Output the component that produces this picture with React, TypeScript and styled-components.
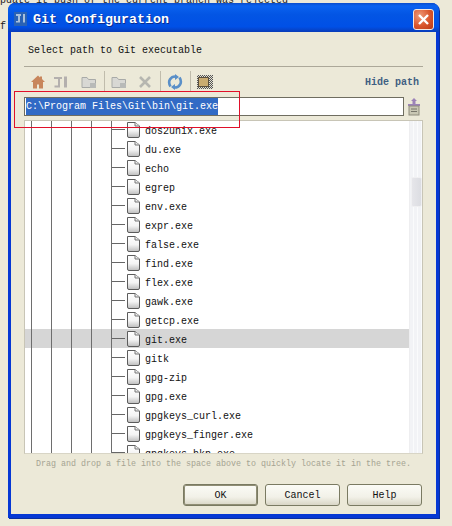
import React from "react";
import styled, { createGlobalStyle } from "styled-components";

const Global = createGlobalStyle`
  html, body { margin: 0; padding: 0; background: #ece9d8; }
  * { box-sizing: border-box; }
`;
const mono = `"Liberation Mono", "Courier New", monospace`;

const Desktop = styled.div`
  position: relative; width: 452px; height: 526px; overflow: hidden;
  background: #ece9d8; font-family: ${mono}; font-size: 10px; color: #000;
`;
const BackText = styled.div<{ $x: number; $y: number }>`
  position: absolute; left: ${p => p.$x}px; top: ${p => p.$y}px;
  white-space: nowrap; font-size: 10px; line-height: 12px; color: #222;
`;
const Win = styled.div`
  position: absolute; left: 8px; top: 3px; width: 431px; height: 515px;
  display: flex; flex-direction: column;
  background: #0a3fd0; border-radius: 7px 7px 0 0;
  border: solid #0638d4; border-width: 0 3px 4px 3px;
  box-shadow: 1px 1px 0 #0a2ea0;
`;
const TitleBar = styled.div`
  height: 29px; flex: none; display: flex; align-items: center; margin: 0 -3px;
  padding: 3px 5px 0 6px; gap: 6px; border-radius: 7px 7px 0 0;
  background: linear-gradient(180deg, #0a4ccc 0%, #0a62f0 10%, #0355e4 40%, #0050e6 82%, #0a3cb8 100%);
`;
const TitleText = styled.div`
  flex: 1; color: #fff; font-weight: bold; font-size: 13.33px;
  text-shadow: 1px 1px 0 #0a2c90;
`;
const CloseBtn = styled.div`
  width: 21px; height: 21px; border: 1px solid #f4e8e0; border-radius: 3px;
  background: radial-gradient(circle at 30% 30%, #ef9a78, #d9552c 55%, #b83a18);
  display: flex; align-items: center; justify-content: center;
`;
const Body = styled.div`
  flex: 1; min-height: 0; background: #ece9d8; display: flex; flex-direction: column;
  padding: 13px 13px 8px 13px;
`;
const Prompt = styled.div`
  height: 12px; line-height: 12px; padding-left: 4px; color: #111; flex: none;
`;
const Rule = styled.div`
  height: 1px; background: #aca899; margin-top: 9px; flex: none;
`;
const Toolbar = styled.div`
  height: 30px; flex: none; display: flex; align-items: center; padding: 0 0 1px 6px;
`;
const ToolIcon = styled.span<{ $mr: number }>`
  width: 16px; height: 16px; margin-right: ${p => p.$mr}px; display: flex; flex: none;
`;
const Sep = styled.span`
  width: 1px; height: 21px; background: #c0bcac; margin-right: 6px; flex: none;
`;
const HideLink = styled.span`
  margin-left: auto; color: #3f5f82; font-weight: bold; font-size: 10px; padding: 0 4px 0 0; margin-top: 2px;
`;
const PathRow = styled.div`
  display: flex; align-items: center; gap: 3px; flex: none; height: 19px; padding-right: 2px;
`;
const PathField = styled.div`
  flex: 1; height: 19px; background: #fff; border: 1px solid #6f6d60; padding: 0 1px;
  display: flex; align-items: center;
`;
const Selected = styled.span`
  background: #316ac5; color: #fff; line-height: 18px; height: 17px;
`;
const Tree = styled.div`
  margin-top: 4px; height: 334px; flex: none; position: relative; overflow: hidden;
  background-color: #fff; border: 1px solid #c8c5b6; border-bottom-color: #d8d5c6;
  display: flex;
`;
const Rows = styled.div`
  flex: 1; margin-top: -1px;
`;
const guide = "linear-gradient(#6e6e6e, #6e6e6e)";
const Row = styled.div<{ $sel?: boolean }>`
  height: 19px; display: flex; align-items: center; position: relative;
  padding-left: 102px; gap: 5px; white-space: nowrap; color: #111;
  background-color: ${p => (p.$sel ? "#d6d6d6" : "transparent")};
  background-image: ${guide}, ${guide}, ${guide}, ${guide}, ${guide};
  background-size: 1px 100%; background-repeat: no-repeat;
  background-position: 6px 0, 26px 0, 46px 0, 66px 0, 86px 0;
  &::before { content: ""; position: absolute; left: 87px; top: 9px; width: 13px; height: 1px; background: #666; }
`;
const RowLabel = styled.span`
  padding-top: 4px; line-height: 12px;
`;
const ScrollTrack = styled.div`
  width: 13px; flex: none; position: relative;
  background: repeating-linear-gradient(90deg, #f2f3f6 0 3px, #fafbfc 3px 4px);
  border-left: 1px solid #eeeef0;
`;
const Thumb = styled.div`
  position: absolute; left: 1px; top: 56px; width: 11px; height: 30px;
  background: linear-gradient(90deg, #e6e6ea, #dcdde2); border: 1px solid #f0f0f2; border-radius: 2px;
`;
const Hint = styled.div`
  height: 20px; flex: none; font-size: 8.33px; line-height: 20px; color: #a5a392; text-align: center;
`;
const Buttons = styled.div`
  display: flex; justify-content: flex-end; gap: 7px; margin-top: 10px; flex: none; padding-right: 1px;
`;
const Btn = styled.div<{ $def?: boolean }>`
  width: 75px; height: 22px; display: flex; align-items: center; justify-content: center;
  border-radius: 3px; color: #111;
  border: 1px solid #7a7a62;
  background: linear-gradient(180deg, #fbfbf6 0%, #f2f1e8 60%, #d9d6c6 100%);
  box-shadow: ${p => (p.$def ? "inset 0 0 0 1px #8f8d74" : "none")};
`;
const Annotation = styled.div`
  position: absolute; left: 14px; top: 91px; width: 226px; height: 37px;
  border: 1px solid #e0102a; pointer-events: none;
`;

const FileIcon = () => (
  <svg width="13" height="16" viewBox="0 0 13 16" style={{ flex: "none" }}>
    <defs>
      <linearGradient id="fg" x1="0" y1="0" x2="0" y2="1">
        <stop offset="0" stopColor="#ffffff" />
        <stop offset="0.55" stopColor="#f4f4f4" />
        <stop offset="1" stopColor="#bdbdbd" />
      </linearGradient>
    </defs>
    <path d="M.5 .5H8L12.500 4V14Q12.500 15.500 11 15.500H2Q.5 15.500 .5 14Z" fill="url(#fg)" stroke="#5c5c5c" />
    <path d="M8 .5V4H12.500" fill="#eee" stroke="#777" />
  </svg>
);

const Home = () => (
  <svg width="16" height="16" viewBox="0 0 16 16">
    <path d="M8 1.500L1 8h2v6.500h4v-4h2v4h4V8h2l-3-3V2.500h-2v1z" fill="#c8865c" />
  </svg>
);
const JIcon = () => (
  <svg width="16" height="16" viewBox="0 0 16 16">
    <path d="M1 3h8v2H7v8.500H1.500v-2H5V5H1zM11 2.500h3v11h-3z" fill="#b4b0ae" />
  </svg>
);
const Folder = () => (
  <svg width="16" height="16" viewBox="0 0 16 16">
    <path d="M1 3.500h5l1.500 2H14.500v8H1z" fill="#d8d8d4" stroke="#a8aaa8" />
    <rect x="9" y="9" width="6" height="5" fill="#b8bab8" />
  </svg>
);
const Cross = () => (
  <svg width="16" height="16" viewBox="0 0 16 16">
    <path d="M3 3l10 10M13 3L3 13" stroke="#b6b6b0" strokeWidth="2.6" />
  </svg>
);
const Sync = () => (
  <svg width="16" height="16" viewBox="0 0 16 16" fill="none">
    <path d="M3.500 12.500C0 7 4 2 9 2.500M12.500 3.500c3.500 5.500-.5 10.500-5.500 10" stroke="#5a8fc8" strokeWidth="2.6" />
    <path d="M8 0v6l4-3zM8 10v6l-4-3z" fill="#5a8fc8" />
  </svg>
);
const Grid = () => (
  <svg width="16" height="16" viewBox="0 0 16 16">
    <defs>
      <pattern id="chk" width="2" height="2" patternUnits="userSpaceOnUse">
        <rect width="2" height="2" fill="#e4e2d4" />
        <rect width="1" height="1" fill="#555" />
        <rect x="1" y="1" width="1" height="1" fill="#555" />
      </pattern>
    </defs>
    <rect x="0" y="1" width="16" height="14" fill="url(#chk)" />
    <rect x="1.500" y="3.500" width="10" height="9" fill="#c9ab70" stroke="#5a5040" />
  </svg>
);
const Pin = () => (
  <svg width="14" height="18" viewBox="0 0 14 18" style={{ flex: "none" }}>
    <path d="M7 0l3 3H8.500v3H13v2H1V6h4.500V3H4z" fill="#9c83b8" />
    <rect x="2" y="8" width="10" height="9" fill="#c9c7b4" stroke="#8e8c7c" />
    <path d="M4 11h6M4 13.500h6" stroke="#77756a" />
  </svg>
);

const files = [
  "dos2unix.exe", "du.exe", "echo", "egrep", "env.exe", "expr.exe", "false.exe", "find.exe",
  "flex.exe", "gawk.exe", "getcp.exe", "git.exe", "gitk", "gpg-zip", "gpg.exe",
  "gpgkeys_curl.exe", "gpgkeys_finger.exe", "gpgkeys_hkp.exe",
];

export default function App() {
  return (
    <Desktop>
      <Global />
      <BackText $x={-6} $y={-5}>update it push of the current branch was rejected</BackText>
      <BackText $x={0} $y={21}>f</BackText>
      <Win>
        <TitleBar>
          <svg width="13" height="14" viewBox="0 0 13 14">
            <rect width="13" height="14" fill="#2a62b4" />
            <path d="M2 2h5v2H6v6.500H2V9h2V4H2zM9 2h2v8.500H9z" fill="#a8c0dc" />
          </svg>
          <TitleText>Git Configuration</TitleText>
          <CloseBtn>
            <svg width="13" height="13" viewBox="0 0 13 13">
              <path d="M2 2l9 9M11 2l-9 9" stroke="#fff" strokeWidth="2.4" />
            </svg>
          </CloseBtn>
        </TitleBar>
        <Body>
          <Prompt>Select path to Git executable</Prompt>
          <Rule />
          <Toolbar>
            <ToolIcon $mr={7}><Home /></ToolIcon>
            <ToolIcon $mr={12}><JIcon /></ToolIcon>
            <ToolIcon $mr={7}><Folder /></ToolIcon>
            <Sep />
            <ToolIcon $mr={10}><Folder /></ToolIcon>
            <ToolIcon $mr={7}><Cross /></ToolIcon>
            <Sep />
            <ToolIcon $mr={7}><Sync /></ToolIcon>
            <Sep />
            <ToolIcon $mr={0}><Grid /></ToolIcon>
            <HideLink>Hide path</HideLink>
          </Toolbar>
          <PathRow>
            <PathField><Selected>C:\Program Files\Git\bin\git.exe</Selected></PathField>
            <Pin />
          </PathRow>
          <Tree>
            <Rows>
              {files.map(f => (
                <Row key={f} $sel={f === "git.exe"}>
                  <FileIcon />
                  <RowLabel>{f}</RowLabel>
                </Row>
              ))}
            </Rows>
            <ScrollTrack><Thumb /></ScrollTrack>
          </Tree>
          <Hint>Drag and drop a file into the space above to quickly locate it in the tree.</Hint>
          <Buttons>
            <Btn $def>OK</Btn>
            <Btn>Cancel</Btn>
            <Btn>Help</Btn>
          </Buttons>
        </Body>
      </Win>
      <Annotation />
    </Desktop>
  );
}
